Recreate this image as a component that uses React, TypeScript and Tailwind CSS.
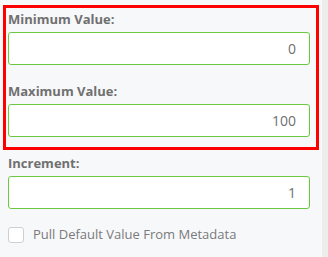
import React from 'react';

const font = { fontFamily: '"Open Sans", "Liberation Sans", sans-serif' };

function Field({ label, value, className = '' }: { label: string; value: string; className?: string }) {
    return (
        <div className={className}>
            <label className="block pl-[2px] text-[13px] leading-[18px] font-bold text-[#707070]">{label}</label>
            <div className="mt-[4px] ml-[2px] w-[302px] h-[33px] flex items-center justify-end pr-[13px] bg-white border border-[#6cc93f] rounded-[3px] text-[14px] text-[#707070]">
                {value}
            </div>
        </div>
    );
}

export default function App() {
    return (
        <div className="w-[328px] h-[257px] flex bg-[#f7f8fa] overflow-hidden" style={font}>
            <div className="flex-1">
                {/* Highlighted range */}
                <div className="ml-[3px] mt-[5px] w-[316px] border-[3px] border-[#ff0000] pt-[2px] pb-[10px]">
                    <Field label="Minimum Value:" value="0" />
                    <Field label="Maximum Value:" value="100" className="mt-[17px]" />
                </div>

                <Field label="Increment:" value="1" className="mt-[4px] ml-[6px]" />

                <div className="mt-[16px] ml-[8px] flex items-center gap-[9px]">
                    <span className="w-[16px] h-[16px] bg-white border border-[#cfcfcf] rounded-[3px]" />
                    <span className="text-[13px] text-[#7a7a7a]">Pull Default Value From Metadata</span>
                </div>
            </div>
            {/* scrollbar track */}
            <div className="w-[6px] h-full bg-[#ededed]" />
        </div>
    );
}
